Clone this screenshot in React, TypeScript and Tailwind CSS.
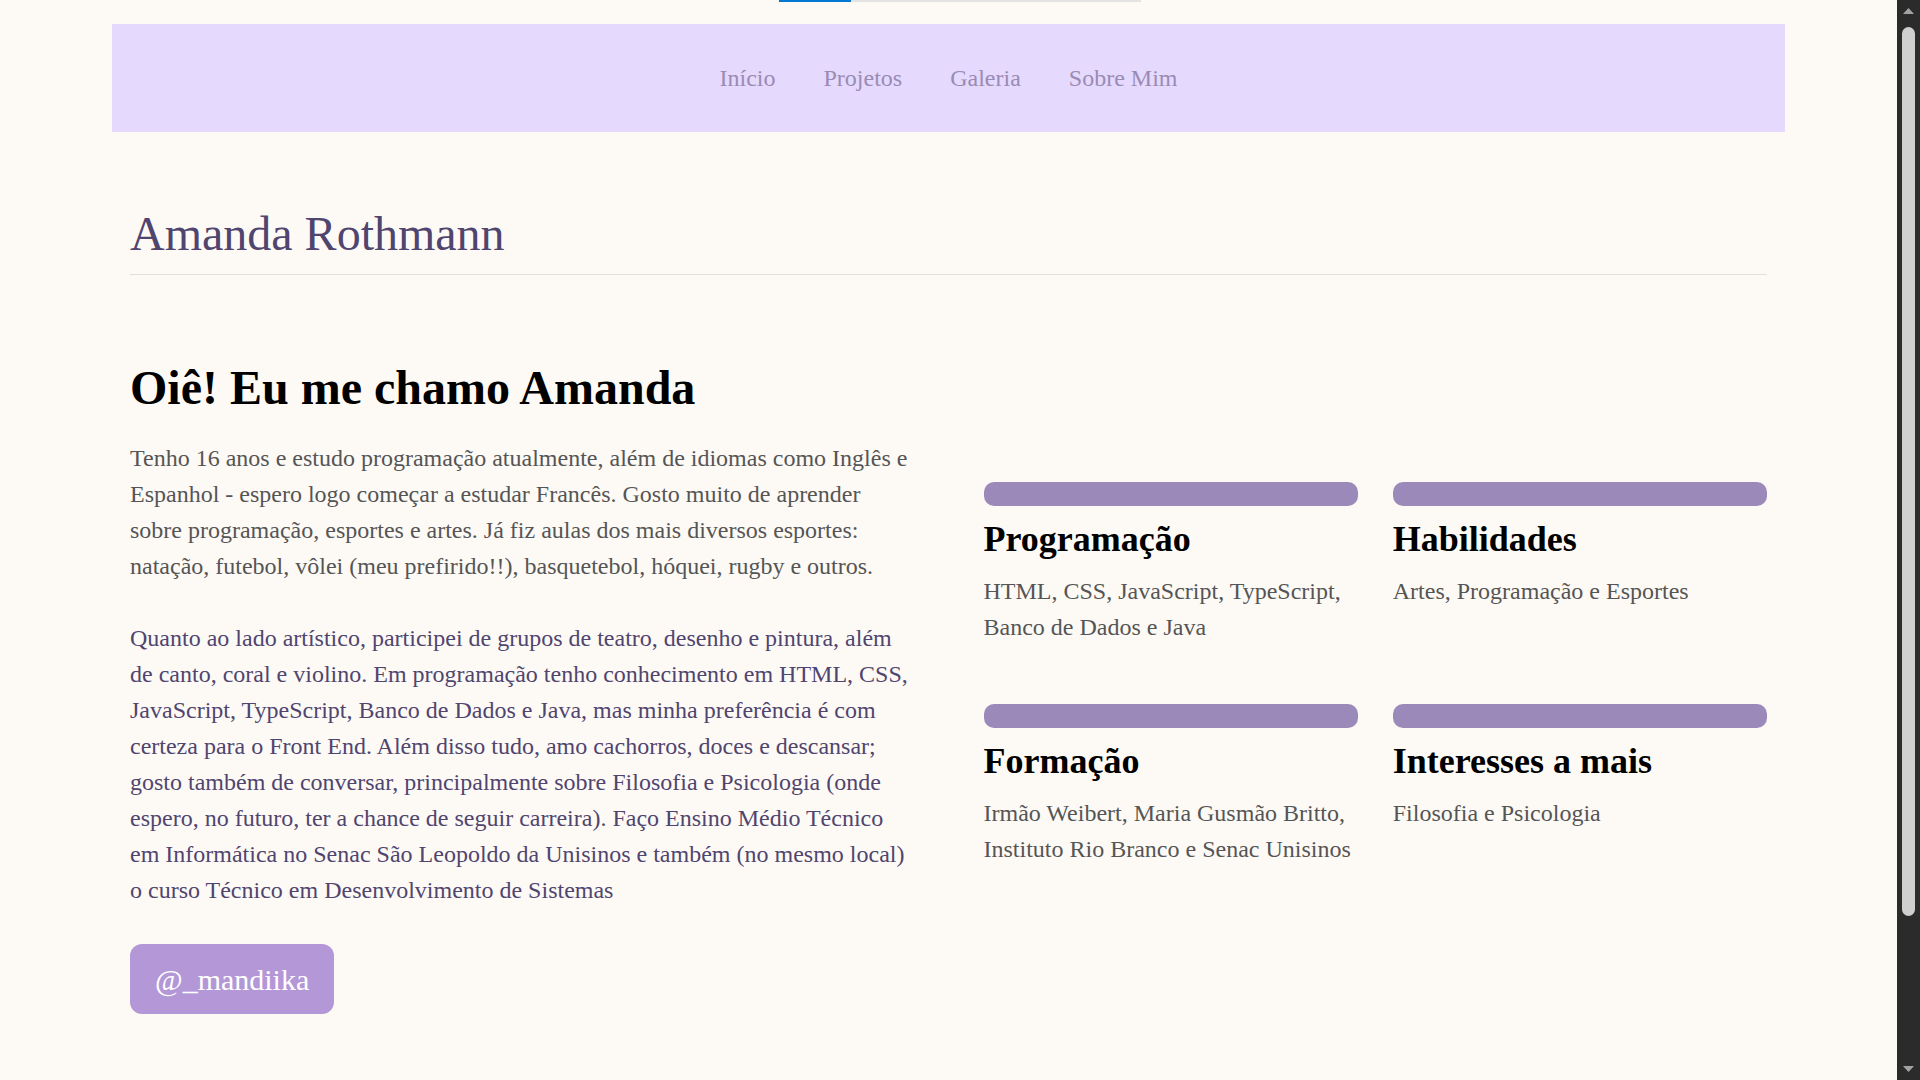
import React from 'react';

const navLinks = ['Início', 'Projetos', 'Galeria', 'Sobre Mim'];

const cards = [
  { title: 'Programação', text: 'HTML, CSS, JavaScript, TypeScript, Banco de Dados e Java' },
  { title: 'Habilidades', text: 'Artes, Programação e Esportes' },
  { title: 'Formação', text: 'Irmão Weibert, Maria Gusmão Britto, Instituto Rio Branco e Senac Unisinos' },
  { title: 'Interesses a mais', text: 'Filosofia e Psicologia' },
];

function Scrollbar() {
  return (
    <div className="w-[23px] shrink-0 bg-[#2b2b2b] flex flex-col items-center">
      <svg width="11" height="6" viewBox="0 0 11 6" className="mt-[8px]">
        <path d="M5.5 0 L11 6 L0 6 Z" fill="#a3a3a3" />
      </svg>
      <div className="mt-[13px] h-[889px] w-[13px] rounded-full bg-[#cfcfcf]" />
      <div className="flex-1" />
      <svg width="11" height="6" viewBox="0 0 11 6" className="mb-[8px]">
        <path d="M0 0 L11 0 L5.5 6 Z" fill="#a3a3a3" />
      </svg>
    </div>
  );
}

export default function App() {
  return (
    <div className="flex h-screen overflow-hidden bg-[#fdfaf6]">
      <div className="flex-1 overflow-y-auto">
        <div className="relative min-h-[1270px] bg-[#fdfaf6] font-['Liberation_Serif',serif] text-[24px] px-[112px] pt-6">
          {/* top loading strip */}
          <div className="absolute top-0 left-[779px] flex h-[2px] w-[362px]">
            <div className="w-[72px] bg-[#0078d4]" />
            <div className="flex-1 bg-[#e3e3e3]" />
          </div>

          {/* Nav */}
          <nav className="h-[108px] bg-[#e5d9fe] flex items-center justify-center gap-[48px]">
            {navLinks.map((link) => (
              <a key={link} href="#" className="text-[24px] text-[#9a8bb4] leading-none">
                {link}
              </a>
            ))}
          </nav>

          <div className="px-[18px]">
            {/* Header */}
            <header className="mt-[74px] pb-[13px] border-b border-[#e2dfdd]">
              <h1 className="text-[48px] leading-[55px] text-[#50456e]">Amanda Rothmann</h1>
            </header>

            <main className="mt-[85px] grid grid-cols-2 gap-[70px]">
              {/* About */}
              <section>
                <h2 className="text-[48px] leading-[55px] font-bold text-black">Oiê! Eu me chamo Amanda</h2>
                <p className="mt-[25px] leading-[36px] text-[#555555]">
                  Tenho 16 anos e estudo programação atualmente, além de idiomas como Inglês e Espanhol - espero
                  logo começar a estudar Francês. Gosto muito de aprender sobre programação, esportes e artes. Já
                  fiz aulas dos mais diversos esportes: natação, futebol, vôlei (meu prefirido!!), basquetebol,
                  hóquei, rugby e outros.
                </p>
                <p className="mt-[36px] leading-[36px] text-[#50456e]">
                  Quanto ao lado artístico, participei de grupos de teatro, desenho e pintura, além de canto, coral
                  e violino. Em programação tenho conhecimento em HTML, CSS, JavaScript, TypeScript, Banco de Dados
                  e Java, mas minha preferência é com certeza para o Front End. Além disso tudo, amo cachorros,
                  doces e descansar; gosto também de conversar, principalmente sobre Filosofia e Psicologia (onde
                  espero, no futuro, ter a chance de seguir carreira). Faço Ensino Médio Técnico em Informática no
                  Senac São Leopoldo da Unisinos e também (no mesmo local) o curso Técnico em Desenvolvimento de
                  Sistemas
                </p>
                <a
                  href="#"
                  className="mt-[36px] inline-flex h-[70px] items-center px-[25px] rounded-xl bg-[#b397d7] text-white text-[30px]"
                >
                  @_mandiika
                </a>
              </section>

              {/* Cards */}
              <section className="mt-[122px] grid grid-cols-2 gap-x-[35px] gap-y-[59px] self-start">
                {cards.map((card) => (
                  <div key={card.title}>
                    <div className="h-[24px] rounded-[10px] bg-[#9b89b9]" />
                    <h3 className="mt-[12px] text-[36px] leading-[42px] font-bold text-black">{card.title}</h3>
                    <p className="mt-[13px] leading-[36px] text-[#555555]">{card.text}</p>
                  </div>
                ))}
              </section>
            </main>
          </div>
        </div>
      </div>
      <Scrollbar />
    </div>
  );
}
